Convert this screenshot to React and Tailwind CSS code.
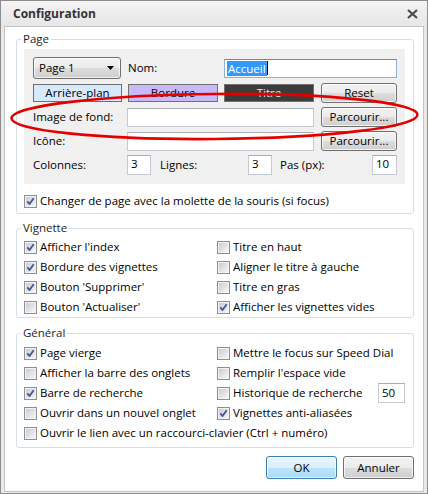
import React from "react";

const btnSkin =
  "rounded-[3px] border border-[#707070] bg-[linear-gradient(#f2f2f2_0%,#ebebeb_50%,#dddddd_50%,#cfcfcf_100%)] shadow-[inset_0_0_0_1px_rgba(255,255,255,0.7)]";
const btn = `flex items-center justify-center ${btnSkin}`;

const field = "h-[19px] border border-[#c5cad2] border-t-[#abadb3] bg-white";

const Check = ({ checked }) => (
  <svg width="13" height="13" viewBox="0 0 13 13" className="shrink-0">
    <defs>
      <linearGradient id="cbfill" x1="0" y1="0" x2="1" y2="1">
        <stop offset="0" stopColor="#c9ccd2" />
        <stop offset="1" stopColor="#f6f6f6" />
      </linearGradient>
    </defs>
    <rect x="0.5" y="0.5" width="12" height="12" fill="#f3f3f3" stroke="#8e8f8f" />
    <rect x="2" y="2" width="9" height="9" fill="url(#cbfill)" />
    {checked && (
      <path
        d="M3.3 6.4 L5.5 9 L9.7 3.2"
        fill="none"
        stroke="#45599a"
        strokeWidth="1.9"
        strokeLinejoin="round"
      />
    )}
  </svg>
);

const Option = ({ checked, label, className = "" }) => (
  <div className={`flex h-[16px] items-center gap-[3px] whitespace-nowrap ${className}`}>
    <Check checked={checked} />
    <span>{label}</span>
  </div>
);

const Group = ({ title, className = "", children }) => (
  <fieldset className={`rounded-[3px] border border-[#d5dfe5] pl-[7px] pr-[8px] ${className}`}>
    <legend className="ml-[-3px] px-[2px] leading-[16px] text-[#1e1e1e]">{title}</legend>
    {children}
  </fieldset>
);

export default function App() {
  return (
    <div className="relative flex h-[494px] w-[428px] flex-col border border-[#8d8d8d] bg-[#e9e9e9] font-['Open_Sans',sans-serif] text-[11.5px] leading-[16px] text-black">
      {/* title bar */}
      <div className="flex h-[25px] shrink-0 items-center justify-between bg-[linear-gradient(#f4f4f4,#e6e6e6)] pl-[12px] pr-[9px]">
        <span className="text-[12px] font-bold text-[#333]">Configuration</span>
        <svg width="11" height="10" viewBox="0 0 11 10">
          <path d="M1 1 L10 9 M10 1 L1 9" stroke="#4a4a4a" strokeWidth="2.2" />
        </svg>
      </div>

      <div className="mx-[3px] mb-[1px] flex flex-1 flex-col border border-[#c4c4c4] bg-white pl-[11px] pr-[9px]">
        {/* Page */}
        <Group title="Page" className="mt-[4px] pb-[4px]">
          <div className="mt-[2px] flex flex-col gap-[4px] bg-[#f0f0f0] pt-[8px] pb-[9px] pl-[9px] pr-[8px]">
            <div className="flex h-[22px] items-center">
              <div className={`${btnSkin} flex h-[22px] w-[88px] items-center justify-between pl-[5px] pr-[6px]`}>
                <span>Page 1</span>
                <svg width="7" height="4" viewBox="0 0 7 4">
                  <path d="M0 0 H7 L3.5 4 Z" fill="#000" />
                </svg>
              </div>
              <span className="ml-[7px]">Nom:</span>
              <div className="ml-auto flex h-[19px] w-[173px] items-center border border-[#8fb2d4] border-t-[#5d8ec0] bg-white pl-[2px]">
                <span className="bg-[#3399ff] px-[1px] leading-[15px] text-white">Accueil</span>
                <span className="h-[14px] w-px bg-black" />
              </div>
            </div>

            <div className="flex h-[20px] items-center">
              <div className="flex h-[18px] w-[89px] items-center justify-center border border-[#707070] bg-[#d6e9fd]">
                Arrière-plan
              </div>
              <div className="ml-[6px] flex h-[18px] w-[90px] items-center justify-center border border-[#707070] bg-[#c8b9f9]">
                Bordure
              </div>
              <div className="ml-[6px] flex h-[18px] w-[90px] items-center justify-center border border-[#707070] bg-[#3c3c3c] text-[#e8e8e8]">
                Titre
              </div>
              <div className={`${btn} ml-[7px] h-[20px] w-[76px]`}>Reset</div>
            </div>

            <div className="flex h-[20px] items-center">
              <span className="w-[94px]">Image de fond:</span>
              <div className={`${field} w-[187px]`} />
              <div className={`${btn} ml-[7px] h-[20px] w-[76px]`}>Parcourir...</div>
            </div>

            <div className="flex h-[20px] items-center">
              <span className="w-[94px]">Icône:</span>
              <div className={`${field} w-[187px]`} />
              <div className={`${btn} ml-[7px] h-[20px] w-[76px]`}>Parcourir...</div>
            </div>

            <div className="flex h-[20px] items-center">
              <span className="w-[94px]">Colonnes:</span>
              <div className={`${field} h-[20px] w-[24px] pl-[3px]`}>3</div>
              <span className="w-[97px] pl-[9px]">Lignes:</span>
              <div className={`${field} h-[20px] w-[24px] pl-[3px]`}>3</div>
              <span className="w-[100px] pl-[8px]">Pas (px):</span>
              <div className={`${field} h-[20px] w-[25px] pl-[3px]`}>10</div>
            </div>
          </div>

          <Option checked label="Changer de page avec la molette de la souris (si focus)" className="mt-[9px]" />
        </Group>

        {/* Vignette */}
        <Group title="Vignette" className="mt-[6px] pb-[2px]">
          <div className="mt-[3px] grid grid-cols-[193px_1fr] auto-rows-[16px] gap-y-[4px]">
            <Option checked label="Afficher l'index" />
            <Option label="Titre en haut" />
            <Option checked label="Bordure des vignettes" />
            <Option label="Aligner le titre à gauche" />
            <Option checked label="Bouton 'Supprimer'" />
            <Option label="Titre en gras" />
            <Option label="Bouton 'Actualiser'" />
            <Option checked label="Afficher les vignettes vides" />
          </div>
        </Group>

        {/* Général */}
        <Group title="Général" className="mt-[7px] pb-[6px]">
          <div className="mt-[4px] grid grid-cols-[193px_1fr] auto-rows-[16px] gap-y-[4px]">
            <Option checked label="Page vierge" />
            <Option label="Mettre le focus sur Speed Dial" />
            <Option label="Afficher la barre des onglets" />
            <Option label="Remplir l'espace vide" />
            <Option checked label="Barre de recherche" />
            <div className="flex h-[16px] items-center justify-between">
              <Option label="Historique de recherche" />
              <div className={`${field} flex h-[20px] w-[27px] shrink-0 items-center pl-[3px]`}>50</div>
            </div>
            <Option label="Ouvrir dans un nouvel onglet" />
            <Option checked label="Vignettes anti-aliasées" />
            <Option label="Ouvrir le lien avec un raccourci-clavier (Ctrl + numéro)" className="col-span-2" />
          </div>
        </Group>

        <div className="mt-[8px] flex justify-end gap-[6px]">
          <div className="flex h-[23px] w-[71px] items-center justify-center rounded-[3px] border border-[#3c7fb1] bg-[linear-gradient(#eaf6fd_0%,#d9f0fc_50%,#bee6fd_50%,#a7d9f5_100%)] shadow-[inset_0_0_0_1px_rgba(255,255,255,0.6)]">
            OK
          </div>
          <div className={`${btn} h-[23px] w-[71px]`}>Annuler</div>
        </div>
      </div>

      {/* hand-drawn highlight */}
      <svg className="pointer-events-none absolute left-[-1px] top-[-1px]" width="428" height="494">
        <ellipse
          cx="214.5"
          cy="116.5"
          rx="203"
          ry="22.5"
          transform="rotate(-0.5 214.5 116.5)"
          fill="none"
          stroke="#e50000"
          strokeWidth="2.6"
        />
      </svg>
    </div>
  );
}
